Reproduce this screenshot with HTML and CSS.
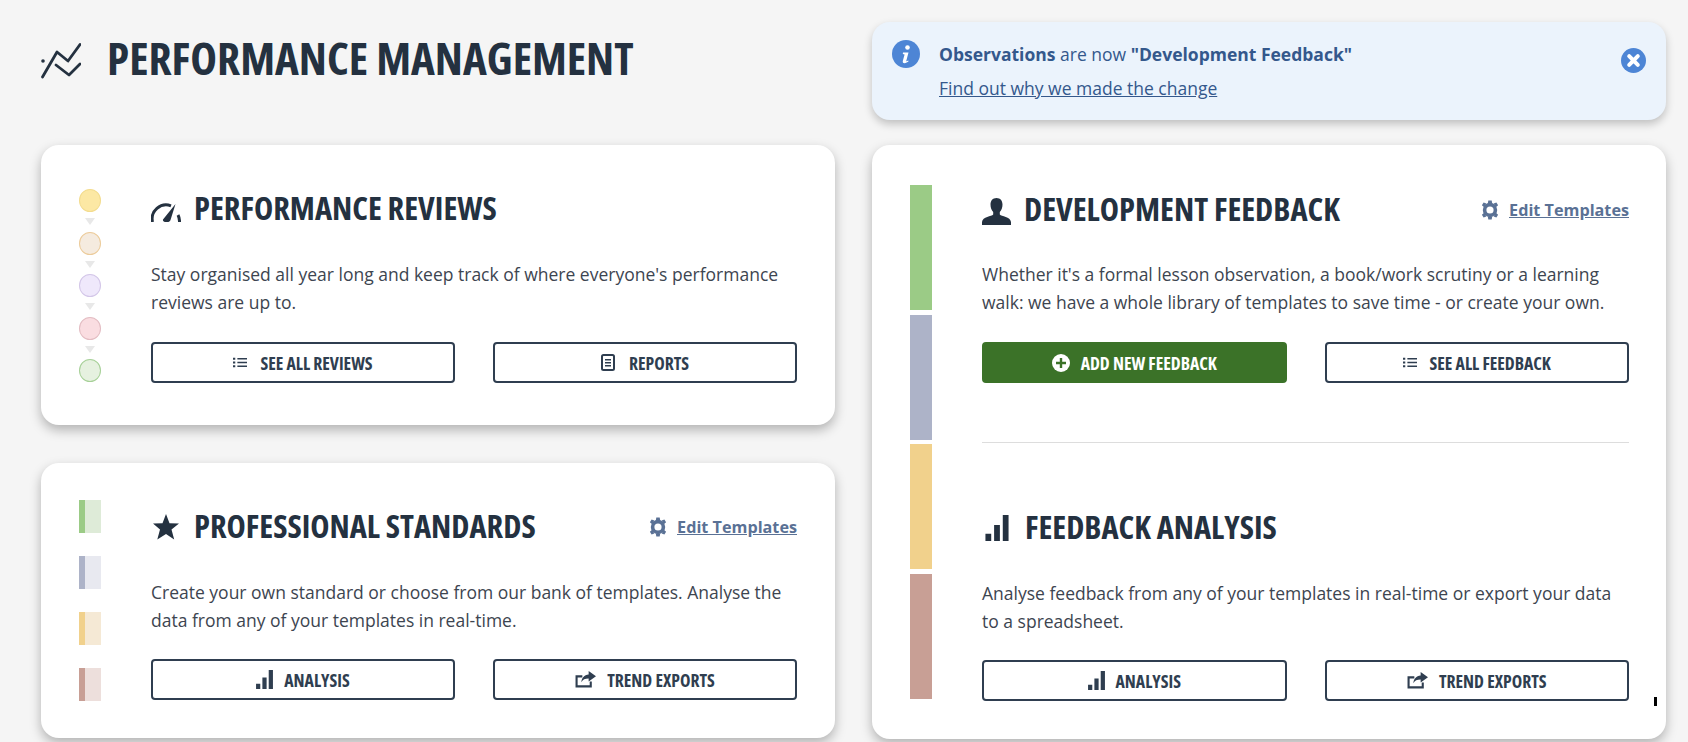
FILE: index.html
```html
<!DOCTYPE html>
<html lang="en">
<head>
<meta charset="utf-8">
<title>Performance Management</title>
<link rel="stylesheet" href="styles.css">
</head>
<body>
<svg class="defs" width="0" height="0" aria-hidden="true">
  <symbol id="i-gear" viewBox="0 0 20 20">
    <circle cx="10" cy="10" r="5.4" fill="none" stroke="currentColor" stroke-width="3.6"/>
    <path d="M8.300 0.600h3.400l.5 3h-4.400zM8.300 19.400h3.400l.5-3h-4.400zM1.900 5.300l1.700-2.900 2.800 1.100-2.200 3.800zM18.100 14.700l-1.700 2.900-2.800-1.100 2.200-3.800zM1.900 14.700l1.700 2.900 2.800-1.100-2.200-3.800zM18.100 5.300l-1.700-2.900-2.800 1.100 2.200 3.800z" fill="currentColor"/>
  </symbol>
  <symbol id="i-list" viewBox="0 0 16 12">
    <path d="M0 0.500h2.600v2.400H0zM0 4.800h2.600v2.400H0zM0 9.100h2.600v2.400H0zM5 0.800h11v1.800H5zM5 5.100h11v1.800H5zM5 9.400h11v1.800H5z" fill="currentColor"/>
  </symbol>
  <symbol id="i-bars" viewBox="0 0 16 18">
    <path d="M0 13h4v5H0zM6 7h4v11H6zM12 0h4v18h-4z" fill="currentColor"/>
  </symbol>
  <symbol id="i-share" viewBox="0 0 20 16">
    <path d="M15 10v4.500H1.500V5H7" fill="none" stroke="currentColor" stroke-width="2"/>
    <path d="M13 0l7 5-7 5V7C9.500 7 7.500 8 6 10.500 6.300 6.500 8.800 3.500 13 3.200z" fill="currentColor"/>
  </symbol>
</svg>

<main class="page">
  <header class="title-row">
    <svg class="title-icon" viewBox="0 0 40 36" aria-hidden="true">
      <path d="M1.500 34L16 9l11 9L39 1.500M15 22l13 10 11-11" fill="none" stroke="currentColor" stroke-width="2.800" stroke-linecap="round" stroke-linejoin="round"/>
      <circle cx="2" cy="18" r="1.800" fill="currentColor"/>
    </svg>
    <h1 class="title">PERFORMANCE MANAGEMENT</h1>
  </header>

  <aside class="notice">
    <svg class="notice-icon" viewBox="0 0 28 28" aria-hidden="true">
      <circle cx="14" cy="14" r="14" fill="currentColor"/>
      <circle cx="15.500" cy="7.500" r="2.300" fill="#fff"/>
      <path d="M11 12.500h5.500l-2.200 8.300c-.2.700.4.900 1.900-.2l.4.700c-2 2-6.500 3-5.800-.3l1.800-6.600-1.800-.4z" fill="#fff"/>
    </svg>
    <div class="notice-body">
      <p class="notice-line"><strong>Observations</strong> are now <strong>"Development Feedback"</strong></p>
      <a class="notice-link" href="#">Find out why we made the change</a>
    </div>
    <svg class="notice-close" viewBox="0 0 25 25" aria-hidden="true">
      <circle cx="12.500" cy="12.500" r="12.500" fill="currentColor"/>
      <path d="M8.200 8.200l8.600 8.600M16.800 8.200l-8.600 8.600" stroke="#fff" stroke-width="4" stroke-linecap="round"/>
    </svg>
  </aside>

  <div class="left-stack">
    <section class="card card-reviews">
      <div class="flow-marks">
        <span class="dot dot-yellow"></span><span class="arrow"></span>
        <span class="dot dot-sand"></span><span class="arrow"></span>
        <span class="dot dot-purple"></span><span class="arrow"></span>
        <span class="dot dot-pink"></span><span class="arrow"></span>
        <span class="dot dot-green"></span>
      </div>
      <div class="card-main">
        <div class="head">
          <svg class="head-icon" viewBox="0 0 30 20" aria-hidden="true">
            <path d="M1.500 20A14 14 0 0 1 20 3.800" fill="none" stroke="currentColor" stroke-width="3"/>
            <path d="M28.500 20a14 14 0 0 0-1.500-7" fill="none" stroke="currentColor" stroke-width="3"/>
            <path d="M12 17.500L24.500 2 19.500 18c-1 3.500-8.500 2.500-7.500-.5z" fill="currentColor"/>
          </svg>
          <h2 class="head-title">PERFORMANCE REVIEWS</h2>
        </div>
        <p class="copy">Stay organised all year long and keep track of where everyone's performance reviews are up to.</p>
        <div class="actions">
          <a class="btn" href="#"><svg class="btn-list"><use href="#i-list"/></svg>SEE ALL REVIEWS</a>
          <a class="btn" href="#">
            <svg class="btn-doc" viewBox="0 0 14 17" aria-hidden="true">
              <rect x="1" y="1" width="12" height="15" rx="1.500" fill="none" stroke="currentColor" stroke-width="2"/>
              <path d="M4 5h6v1.500H4zM4 8h6v1.500H4zM4 11h6v1.500H4z" fill="currentColor"/>
            </svg>REPORTS</a>
        </div>
      </div>
    </section>

    <section class="card card-standards">
      <div class="flag-marks">
        <span class="flag flag-green"></span>
        <span class="flag flag-blue"></span>
        <span class="flag flag-yellow"></span>
        <span class="flag flag-brown"></span>
      </div>
      <div class="card-main">
        <div class="head">
          <svg class="head-icon" viewBox="0 0 26 26" aria-hidden="true">
            <path d="M13 0l3.500 9.300 9.500.3-7.500 6 2.700 10L13 20l-8.700 5.600 2.700-10-7-6 9.500-.3z" fill="currentColor"/>
          </svg>
          <h2 class="head-title">PROFESSIONAL STANDARDS</h2>
          <a class="edit" href="#"><svg class="edit-gear"><use href="#i-gear"/></svg><span class="edit-text">Edit Templates</span></a>
        </div>
        <p class="copy">Create your own standard or choose from our bank of templates. Analyse the data from any of your templates in real-time.</p>
        <div class="actions">
          <a class="btn" href="#"><svg class="btn-bars"><use href="#i-bars"/></svg>ANALYSIS</a>
          <a class="btn" href="#"><svg class="btn-share"><use href="#i-share"/></svg>TREND EXPORTS</a>
        </div>
      </div>
    </section>
  </div>

  <section class="card card-feedback">
    <div class="bar-marks">
      <span class="bar bar-green"></span>
      <span class="bar bar-blue"></span>
      <span class="bar bar-yellow"></span>
      <span class="bar bar-brown"></span>
    </div>
    <div class="card-main">
      <div class="head">
        <svg class="head-icon head-person" viewBox="0 0 29 27" aria-hidden="true">
          <path d="M14.500 0c3.800 0 6 2.800 6 6.500 0 3-1 5.700-2.700 7.500v2.500c1.500 2 10.700 2 11.200 7.500V27H0v-3c.5-5.500 9.700-5.500 11.200-7.500V14c-1.700-1.800-2.700-4.500-2.700-7.500 0-3.700 2.200-6.500 6-6.500z" fill="currentColor"/>
        </svg>
        <h2 class="head-title">DEVELOPMENT FEEDBACK</h2>
        <a class="edit" href="#"><svg class="edit-gear"><use href="#i-gear"/></svg><span class="edit-text">Edit Templates</span></a>
      </div>
      <p class="copy">Whether it's a formal lesson observation, a book/work scrutiny or a learning walk: we have a whole library of templates to save time - or create your own.</p>
      <div class="actions">
        <a class="btn btn-primary" href="#">
          <svg class="btn-plus" viewBox="0 0 18 18" aria-hidden="true">
            <circle cx="9" cy="9" r="9" fill="currentColor"/>
            <path d="M9 4v10M4 9h10" stroke="#3b7228" stroke-width="2.400"/>
          </svg>ADD NEW FEEDBACK</a>
        <a class="btn" href="#"><svg class="btn-list"><use href="#i-list"/></svg>SEE ALL FEEDBACK</a>
      </div>
      <hr class="divider">
      <div class="head">
        <svg class="head-icon head-bars"><use href="#i-bars"/></svg>
        <h2 class="head-title">FEEDBACK ANALYSIS</h2>
      </div>
      <p class="copy copy-analysis">Analyse feedback from any of your templates in real-time or export your data to a spreadsheet.</p>
      <div class="actions">
        <a class="btn" href="#"><svg class="btn-bars"><use href="#i-bars"/></svg>ANALYSIS</a>
        <a class="btn" href="#"><svg class="btn-share"><use href="#i-share"/></svg>TREND EXPORTS</a>
      </div>
    </div>
    <span class="cursor-tick"></span>
  </section>
</main>
</body>
</html>
```

FILE: styles.css
```css
* { box-sizing: border-box; }
html, body { margin: 0; height: 100%; overflow: hidden; }
body {
  background: #f5f5f5;
  color: #243140;
  font-family: "Open Sans", "Noto Sans", sans-serif;
}
.defs { position: absolute; }

.page {
  display: grid;
  grid-template-columns: 794px 794px;
  grid-template-rows: 98px auto;
  column-gap: 37px;
  row-gap: 25px;
  padding: 22px 0 0 41px;
}

.title-row { display: flex; align-items: flex-start; padding-top: 6px; }
.title-icon { width: 40px; height: 36px; margin: 15px 26px 0 0; color: #243140; flex: none; }
.title {
  margin: 0;
  font-size: 45.200px;
  line-height: 60px;
  font-weight: 700;
  font-stretch: 75%;
  color: #243140;
}

.notice {
  display: flex;
  align-items: flex-start;
  background: #ebf3fc;
  border-radius: 18px;
  box-shadow: 0 4px 8px rgba(0,0,0,.22);
  padding: 18px 20px 0 20px;
  color: #34588c;
}
.notice-icon { width: 28px; height: 28px; color: #4d85d5; flex: none; margin-right: 19px; }
.notice-body { flex: 1; }
.notice-line { margin: 0; font-size: 17.500px; line-height: 28px; }
.notice-link { display: block; margin-top: 6px; font-size: 17.500px; line-height: 28px; color: #34588c; }
.notice-close { width: 25px; height: 25px; color: #4d85d5; flex: none; margin-top: 8px; }

.left-stack { display: flex; flex-direction: column; gap: 38px; }

.card {
  position: relative;
  display: flex;
  background: #fff;
  border-radius: 18px;
  box-shadow: 0 5px 12px rgba(0,0,0,.28);
  padding: 0 38px 0 38px;
}
.card-reviews { height: 280px; padding-top: 41px; }
.card-standards { height: 275px; padding-top: 37px; }
.card-feedback { height: 594px; padding-top: 40px; padding-right: 37px; }

.card-main { flex: 1; min-width: 0; margin-left: 50px; }
.card-standards .card-main { padding-top: 4px; }
.card-feedback .card-main { padding-top: 2px; }

.flow-marks, .flag-marks, .bar-marks { width: 22px; flex: none; display: flex; flex-direction: column; }

.flow-marks { padding-top: 3px; }
.dot { display: block; width: 22px; height: 23px; border-radius: 50%; border: 1px solid; }
.dot-yellow { background: #fce8a4; border-color: #f3dc8e; }
.dot-sand { background: #f5ebdf; border-color: #eccb9a; }
.dot-purple { background: #efe8fb; border-color: #d3c6e8; }
.dot-pink { background: #fadde1; border-color: #e3bcc2; }
.dot-green { background: #e6f1e0; border-color: #a6d097; }
.arrow {
  display: block;
  width: 0;
  height: 0;
  margin: 6px auto 6.600px;
  border-left: 5px solid transparent;
  border-right: 5px solid transparent;
  border-top: 7px solid #e8e8e8;
}

.flag-marks { gap: 23px; }
.flag { display: block; height: 33px; border-left: 6px solid; }
.flag-green { background: #deebd8; border-color: #9bcb86; }
.flag-blue { background: #e8e9f0; border-color: #adb3c8; }
.flag-yellow { background: #f5e9d5; border-color: #f1d18c; }
.flag-brown { background: #eddfdc; border-color: #c89f95; }

.bar-marks { gap: 4.670px; }
.bar { display: block; height: 125px; }
.bar-green { background: #9bcb86; }
.bar-blue { background: #adb3c8; }
.bar-yellow { background: #f1d18c; }
.bar-brown { background: #c89f95; }

.head { display: flex; align-items: center; height: 44px; }
.head-icon { width: 30px; height: 20px; flex: none; margin: 7px 13px 0 0; color: #243140; }
.head-person { width: 29px; height: 27px; margin-top: 4px; }
.head-bars { width: 24px; height: 26px; margin: 1px 16px 0 3px; }
.card-standards .head-icon { height: 26px; width: 26px; margin: 2px 15px 0 2px; }
.head-title {
  margin: 0;
  font-size: 32.500px;
  line-height: 44px;
  font-weight: 700;
  font-stretch: 75%;
  color: #243140;
  flex: 1;
  white-space: nowrap;
}
.edit { display: flex; align-items: center; color: #5a7195; font-size: 16.200px; font-weight: 700; margin-top: 2px; }
.edit-gear { width: 20px; height: 20px; margin-right: 9px; flex: none; }
.edit-text { text-decoration: underline; }

.copy { margin: 30px 0 26px; font-size: 17.500px; line-height: 28px; color: #3d4550; }
.card-standards .copy { margin-bottom: 25px; }
.card-feedback .copy { margin-top: 29px; }
.card-feedback .copy-analysis { margin-top: 30px; margin-bottom: 25px; }

.actions { display: grid; grid-template-columns: 1fr 1fr; column-gap: 38px; }
.btn {
  display: flex;
  align-items: center;
  justify-content: center;
  height: 41px;
  border: 2px solid #2f3e50;
  border-radius: 4px;
  color: #2f3e50;
  font-size: 17.700px;
  font-weight: 700;
  font-stretch: 75%;
  text-decoration: none;
  white-space: nowrap;
}
.btn-primary { background: #3b7228; border-color: #3b7228; color: #fff; }
.btn-list { width: 14px; height: 11px; margin-right: 13px; }
.btn-doc { width: 14px; height: 17px; margin-right: 14px; }
.btn-bars { width: 17px; height: 19px; margin-right: 11px; }
.btn-share { width: 21px; height: 17px; margin-right: 11px; }
.btn-plus { width: 18px; height: 18px; margin-right: 11px; }

.divider { border: 0; border-top: 1px solid #ddd; margin: 59px 0 62px; }

.cursor-tick { position: absolute; left: 782px; top: 552px; width: 3px; height: 9px; background: #000; }
```
